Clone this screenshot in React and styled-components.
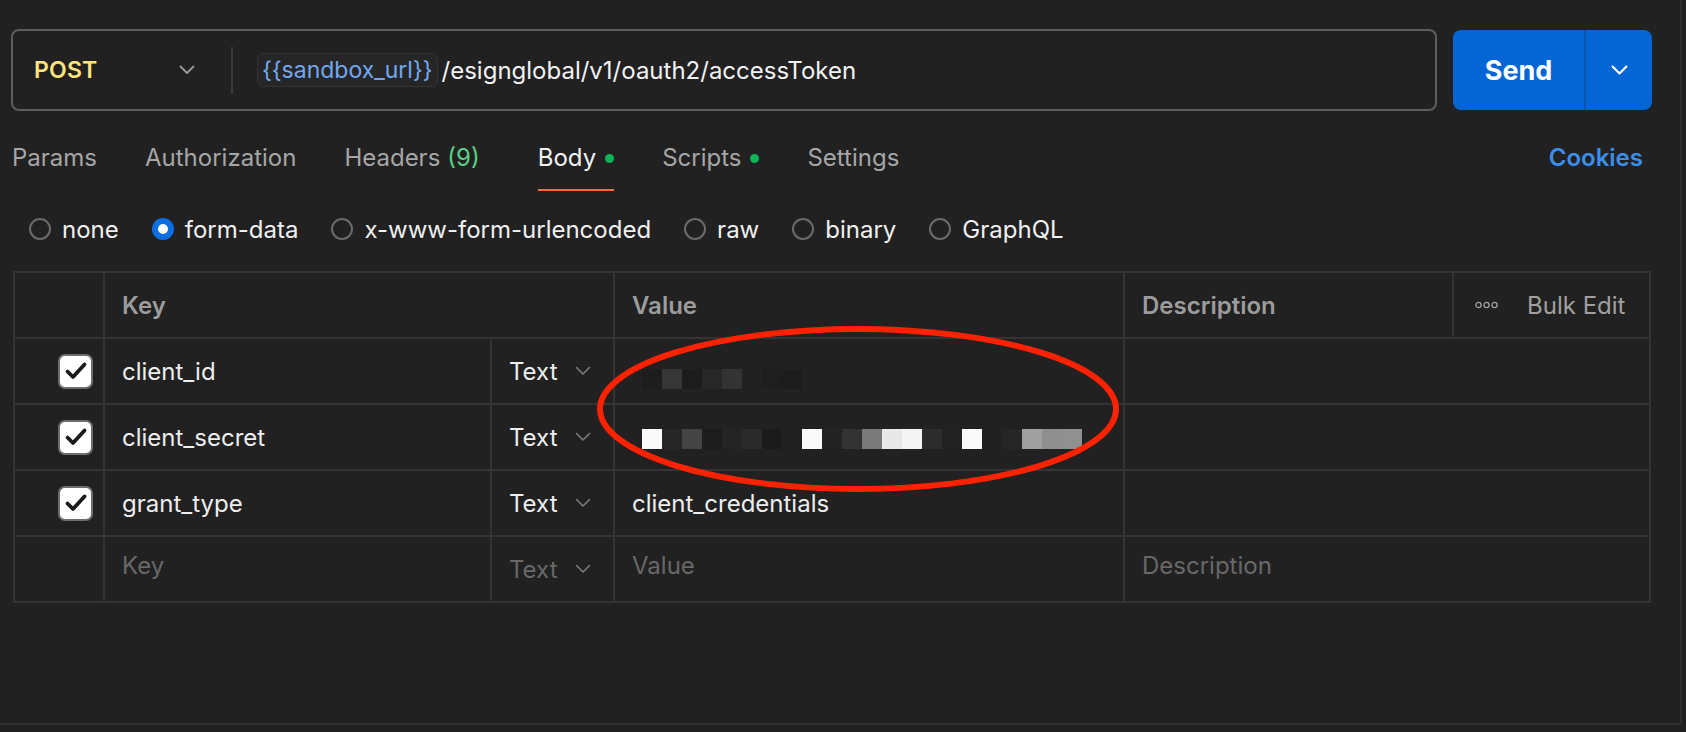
import React from "react";
import styled, { createGlobalStyle } from "styled-components";

const GlobalStyle = createGlobalStyle`
  html, body { margin: 0; padding: 0; background: #212121; }
  body { font-family: Inter, "Noto Sans", sans-serif; color: #f0f0f0; }
  * { box-sizing: border-box; }
`;

const Page = styled.div`
  position: relative;
  width: 1686px;
  height: 732px;
  overflow: hidden;
  background: #212121;
`;

const Panel = styled.div`
  width: 1682px;
  height: 725px;
  border-right: 2px solid #2e2e2e;
  border-bottom: 2px solid #2e2e2e;
  padding: 29px 28px 0 11px;
`;

const UrlRow = styled.div`
  display: flex;
  gap: 16px;
  height: 82px;
`;

const UrlBox = styled.div`
  flex: 1;
  display: flex;
  align-items: center;
  border: 2px solid #5e5e5e;
  border-radius: 8px;
`;

const MethodSelect = styled.div`
  width: 218px;
  display: flex;
  align-items: center;
  justify-content: space-between;
  padding: 0 36px 0 21px;
`;

const Method = styled.span`
  font-size: 23px;
  font-weight: 600;
  color: #ffe47e;
  letter-spacing: 0.2px;
`;

const Divider = styled.div`
  width: 2px;
  height: 47px;
  background: #3a3a3a;
`;

const UrlText = styled.div`
  display: flex;
  align-items: center;
  margin-left: 24px;
  font-size: 24px;
  color: #f2f2f2;
`;

const VarChip = styled.span`
  display: inline-flex;
  align-items: center;
  height: 34px;
  padding: 0 4px;
  margin-right: 4px;
  border: 1px solid #333;
  border-radius: 6px;
  background: #262626;
  color: #72a8f2;
  font-size: 23px;
`;

const SendGroup = styled.div`
  display: flex;
  width: 199px;
  height: 80px;
  margin-top: 1px;
  border-radius: 8px;
  overflow: hidden;
  background: #0466d4;
`;

const SendButton = styled.div`
  width: 133px;
  display: flex;
  align-items: center;
  justify-content: center;
  border-right: 2px solid #0b56aa;
  font-size: 27px;
  font-weight: 700;
  color: #fff;
`;

const SendArrow = styled.div`
  flex: 1;
  display: flex;
  align-items: center;
  justify-content: center;
`;

const TabBar = styled.div`
  display: flex;
  align-items: flex-start;
  margin-top: 33px;
  padding-left: 1px;
`;

const Tab = styled.div`
  display: flex;
  align-items: center;
  gap: 9px;
  height: 47px;
  padding-bottom: 17px;
  margin-right: ${(p) => (p.$extra ? 58 : 48)}px;
  font-size: 24px;
  line-height: 28px;
  color: ${(p) => (p.$active ? "#f2f2f2" : "#a6a6a6")};
  border-bottom: 2px solid ${(p) => (p.$active ? "#ff6c37" : "transparent")};
`;

const Count = styled.span`
  color: #5ccf87;
  margin-left: -2px;
`;

const Dot = styled.span`
  width: 9px;
  height: 9px;
  border-radius: 50%;
  background: #0cb456;
`;

const Cookies = styled.div`
  margin-left: auto;
  margin-right: 9px;
  font-size: 24px;
  line-height: 28px;
  font-weight: 600;
  color: #3b8eea;
`;

const RadioRow = styled.div`
  display: flex;
  align-items: center;
  gap: 33px;
  margin-top: 24px;
  padding-left: 18px;
  height: 28px;
`;

const RadioItem = styled.label`
  display: flex;
  align-items: center;
  gap: 11px;
  font-size: 24px;
  color: #f0f0f0;
`;

const RadioCircle = styled.span`
  width: 22px;
  height: 22px;
  border-radius: 50%;
  border: ${(p) => (p.$checked ? "6px solid #0b6fe3" : "2px solid #6b6b6b")};
  background: ${(p) => (p.$checked ? "#fff" : "transparent")};
`;

const Table = styled.div`
  display: grid;
  grid-template-columns: 88px 385px 121px 508px 1fr;
  grid-auto-rows: 64px;
  gap: 2px;
  padding: 2px;
  margin: 28px 0 0 2px;
  width: 1638px;
  background: #343434;
`;

const Cell = styled.div`
  display: flex;
  align-items: center;
  padding-left: 17px;
  padding-bottom: ${(p) => (p.$placeholder ? 8 : 0)}px;
  background: #212121;
  font-size: 24px;
  color: ${(p) => (p.$muted || p.$placeholder ? "#686868" : "#eeeeee")};
  grid-column: ${(p) => p.$span || "auto"};
`;

const HeadCell = styled(Cell)`
  font-weight: 600;
  color: #9c9c9c;
`;

const CheckCell = styled(Cell)`
  justify-content: flex-end;
  padding: 0 10px 0 0;
`;

const CheckBox = styled.span`
  width: 35px;
  height: 35px;
  display: flex;
  align-items: center;
  justify-content: center;
  border-radius: 7px;
  border: 2px solid #6e6e6e;
  background: #fff;
`;

const TypeCell = styled(Cell)`
  gap: 17px;
`;

const BulkArea = styled.div`
  display: flex;
  align-items: center;
  height: 100%;
  width: 197px;
  margin-left: auto;
  padding-left: 21px;
  gap: 29px;
  border-left: 2px solid #343434;
  font-weight: 400;
  color: #a0a0a0;
`;

const Mosaic = styled.div`
  display: flex;
  margin-left: 10px;
  margin-top: ${(p) => p.$shift}px;
`;

const Block = styled.span`
  width: 20px;
  height: 20px;
  background: ${(p) => p.$c};
`;

const Annotation = styled.svg`
  position: absolute;
  left: 590px;
  top: 320px;
  pointer-events: none;
`;

const Chevron = ({ color = "#9a9a9a", w = 16, stroke = 1.8 }) => (
  <svg width={w} height={w * 0.6} viewBox="0 0 16 9.6" fill="none">
    <path d="M1.5 1.5 L8 8 L14.5 1.5" stroke={color} strokeWidth={stroke} strokeLinecap="round" strokeLinejoin="round" />
  </svg>
);

const Check = () => (
  <svg width="24" height="20" viewBox="0 0 24 20" fill="none">
    <path d="M3.5 10.5 L9 16 L20.5 3.5" stroke="#1a1a1a" strokeWidth="3.8" strokeLinecap="round" strokeLinejoin="round" />
  </svg>
);

const Dots = () => (
  <svg width="23" height="8" viewBox="0 0 23 8" fill="none">
    {[3.5, 11.5, 19.5].map((x) => (
      <circle key={x} cx={x} cy="4" r="2.6" stroke="#a0a0a0" strokeWidth="1.3" />
    ))}
  </svg>
);

const row1 = ["#1d1d1d", "#363636", "#1c1c1c", "#272727", "#333333", "#212121", "#1e1e1e", "#1c1c1c"];
const row2 = [
  "#fafafa", "#262626", "#444444", "#1c1c1c", "#242424", "#2a2a2a", "#1b1b1b", "#212121",
  "#fafafa", "#232323", "#333333", "#7a7a7a", "#e8e8e8", "#f5f5f5", "#2c2c2c", "#222222",
  "#fafafa", "#212121", "#262626", "#a0a0a0", "#8f8f8f", "#909090",
];

const rows = [
  { key: "client_id", mosaic: row1, shift: 16 },
  { key: "client_secret", mosaic: row2, shift: 4 },
  { key: "grant_type", value: "client_credentials" },
];

const tabs = [
  { label: "Params" },
  { label: "Authorization" },
  { label: "Headers", count: "(9)", extra: true },
  { label: "Body", dot: true, active: true },
  { label: "Scripts", dot: true },
  { label: "Settings" },
];

const radios = ["none", "form-data", "x-www-form-urlencoded", "raw", "binary", "GraphQL"];

export default function App() {
  return (
    <Page>
      <GlobalStyle />
      <Panel>
        <UrlRow>
          <UrlBox>
            <MethodSelect>
              <Method>POST</Method>
              <Chevron />
            </MethodSelect>
            <Divider />
            <UrlText>
              <VarChip>{"{{sandbox_url}}"}</VarChip>
              /esignglobal/v1/oauth2/accessToken
            </UrlText>
          </UrlBox>
          <SendGroup>
            <SendButton>Send</SendButton>
            <SendArrow>
              <Chevron color="#ffffff" w={17} stroke={2} />
            </SendArrow>
          </SendGroup>
        </UrlRow>

        <TabBar>
          {tabs.map((t) => (
            <Tab key={t.label} $active={t.active} $extra={t.extra}>
              <span>{t.label}</span>
              {t.count && <Count>{t.count}</Count>}
              {t.dot && <Dot />}
            </Tab>
          ))}
          <Cookies>Cookies</Cookies>
        </TabBar>

        <RadioRow>
          {radios.map((r) => (
            <RadioItem key={r}>
              <RadioCircle $checked={r === "form-data"} />
              {r}
            </RadioItem>
          ))}
        </RadioRow>

        <Table>
          <HeadCell />
          <HeadCell $span="span 2">Key</HeadCell>
          <HeadCell>Value</HeadCell>
          <HeadCell>
            Description
            <BulkArea>
              <Dots />
              Bulk Edit
            </BulkArea>
          </HeadCell>

          {rows.map((r) => (
            <React.Fragment key={r.key}>
              <CheckCell>
                <CheckBox>
                  <Check />
                </CheckBox>
              </CheckCell>
              <Cell>{r.key}</Cell>
              <TypeCell>
                Text
                <Chevron color="#7c7c7c" w={16} stroke={1.6} />
              </TypeCell>
              <Cell>
                {r.mosaic ? (
                  <Mosaic $shift={r.shift}>
                    {r.mosaic.map((c, i) => (
                      <Block key={i} $c={c} />
                    ))}
                  </Mosaic>
                ) : (
                  r.value
                )}
              </Cell>
              <Cell />
            </React.Fragment>
          ))}

          <Cell />
          <Cell $placeholder>Key</Cell>
          <TypeCell $muted>
            Text
            <Chevron color="#7c7c7c" w={16} stroke={1.6} />
          </TypeCell>
          <Cell $placeholder>Value</Cell>
          <Cell $placeholder>Description</Cell>
        </Table>
      </Panel>

      <Annotation width="540" height="180" viewBox="0 0 540 180">
        <ellipse cx="268" cy="89" rx="258" ry="80" fill="none" stroke="#ff2200" strokeWidth="6" />
      </Annotation>
    </Page>
  );
}
